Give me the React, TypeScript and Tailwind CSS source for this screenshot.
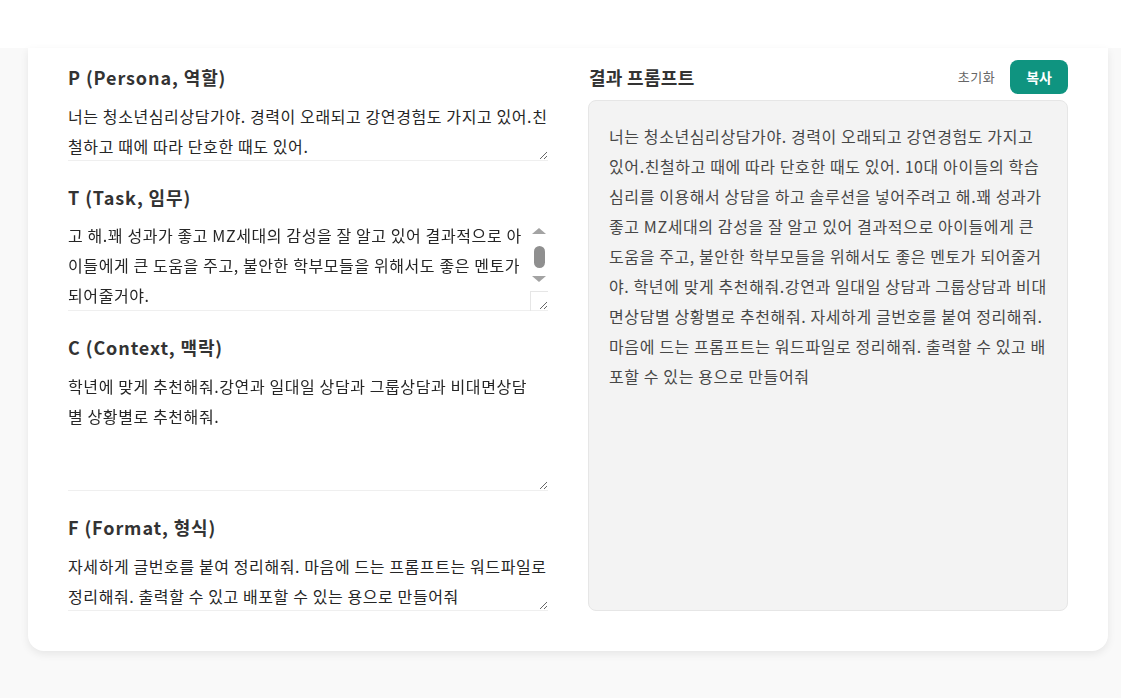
import React, { useEffect, useRef } from "react";

const P = "너는 청소년심리상담가야. 경력이 오래되고 강연경험도 가지고 있어.친철하고 때에 따라 단호한 때도 있어.";
const T = "10대 아이들의 학습심리를 이용해서 상담을 하고 솔루션을 넣어주려고 해.꽤 성과가 좋고 MZ세대의 감성을 잘 알고 있어 결과적으로 아이들에게 큰 도움을 주고, 불안한 학부모들을 위해서도 좋은 멘토가 되어줄거야.";
const C = "학년에 맞게 추천해줘.강연과 일대일 상담과 그룹상담과 비대면상담별 상황별로 추천해줘.";
const F = "자세하게 글번호를 붙여 정리해줘. 마음에 드는 프롬프트는 워드파일로 정리해줘. 출력할 수 있고 배포할 수 있는 용으로 만들어줘";

const font = { fontFamily: '"Noto Sans CJK KR", "Noto Sans", sans-serif' };

function FakeScrollbar() {
  return (
    <>
      <div className="pointer-events-none absolute right-0 top-0 h-[70px] w-[18px]">
        <div className="absolute left-[2px] top-[7px] h-0 w-0 border-x-[7px] border-b-[6px] border-x-transparent border-b-[#a3a3a3]" />
        <div className="absolute left-[3.5px] top-[25px] h-[22px] w-[11px] rounded-full bg-[#8f8f8f]" />
        <div className="absolute left-[2px] top-[55px] h-0 w-0 border-x-[7px] border-t-[6px] border-x-transparent border-t-[#a3a3a3]" />
      </div>
      <div className="pointer-events-none absolute right-0 bottom-0 h-[20px] w-[18px] border-l border-t border-[#e6e6e6]" />
    </>
  );
}

function Field({ label, value, h, pr, scroll }: { label: string; value: string; h: string; pr: string; scroll?: boolean }) {
  const ref = useRef<HTMLTextAreaElement>(null);
  useEffect(() => {
    if (scroll && ref.current) ref.current.scrollTop = ref.current.scrollHeight;
  }, [scroll]);
  return (
    <div className="flex flex-col">
      <div className="h-[34px] leading-[34px] mb-[7px] text-[18px] font-bold tracking-[0.9px] text-[#333333]">{label}</div>
      <div className="relative">
        <textarea
          ref={ref}
          defaultValue={value}
          className={`${h} ${pr} ${scroll ? "overflow-hidden" : ""} block w-full pl-0 py-0 border-0 border-b border-[#efefef] bg-white text-[16px] tracking-[0.6px] leading-[30px] text-[#262626] outline-none`}
          style={font}
        />
        {scroll && <FakeScrollbar />}
      </div>
    </div>
  );
}

export default function App() {
  const result = [P, T, C, F].join(" ");
  return (
    <div className="min-h-[698px] bg-[#f9f9f9]" style={font}>
      <div className="h-12 bg-white" />
      <div className="ml-[28px] w-[1080px] bg-white rounded-b-2xl shadow-[0_3px_8px_rgba(0,0,0,0.08)] px-10 pt-3 pb-10">
        <div className="grid grid-cols-2 gap-10">
          <div className="flex flex-col gap-[19px]">
            <Field label="P (Persona, 역할)" value={P} h="h-[60px]" pr="pr-0" />
            <Field label="T (Task, 임무)" value={T} h="h-[90px]" pr="pr-[18px]" scroll />
            <Field label="C (Context, 맥락)" value={C} h="h-[120px]" pr="pr-[10px]" />
            <Field label="F (Format, 형식)" value={F} h="h-[60px]" pr="pr-0" />
          </div>
          <div className="flex flex-col">
            <div className="h-[34px] mb-[6px] flex items-center justify-between">
              <div className="text-[18px] font-bold tracking-[0.3px] text-[#333333] pl-px">결과 프롬프트</div>
              <div className="flex items-center gap-[7px]">
                <button className="px-2 text-[13px] tracking-[0.5px] text-[#666666]">초기화</button>
                <button className="h-[34px] px-4 rounded-lg bg-[#0f9480] text-white text-[14px] font-bold">복사</button>
              </div>
            </div>
            <div className="flex-1 rounded-lg border border-[#e6e6e6] bg-[#f3f3f3] px-5 py-5 text-[16px] tracking-[0.6px] leading-[30px] text-[#474747] whitespace-pre-wrap">
              {result}
            </div>
          </div>
        </div>
      </div>
    </div>
  );
}
